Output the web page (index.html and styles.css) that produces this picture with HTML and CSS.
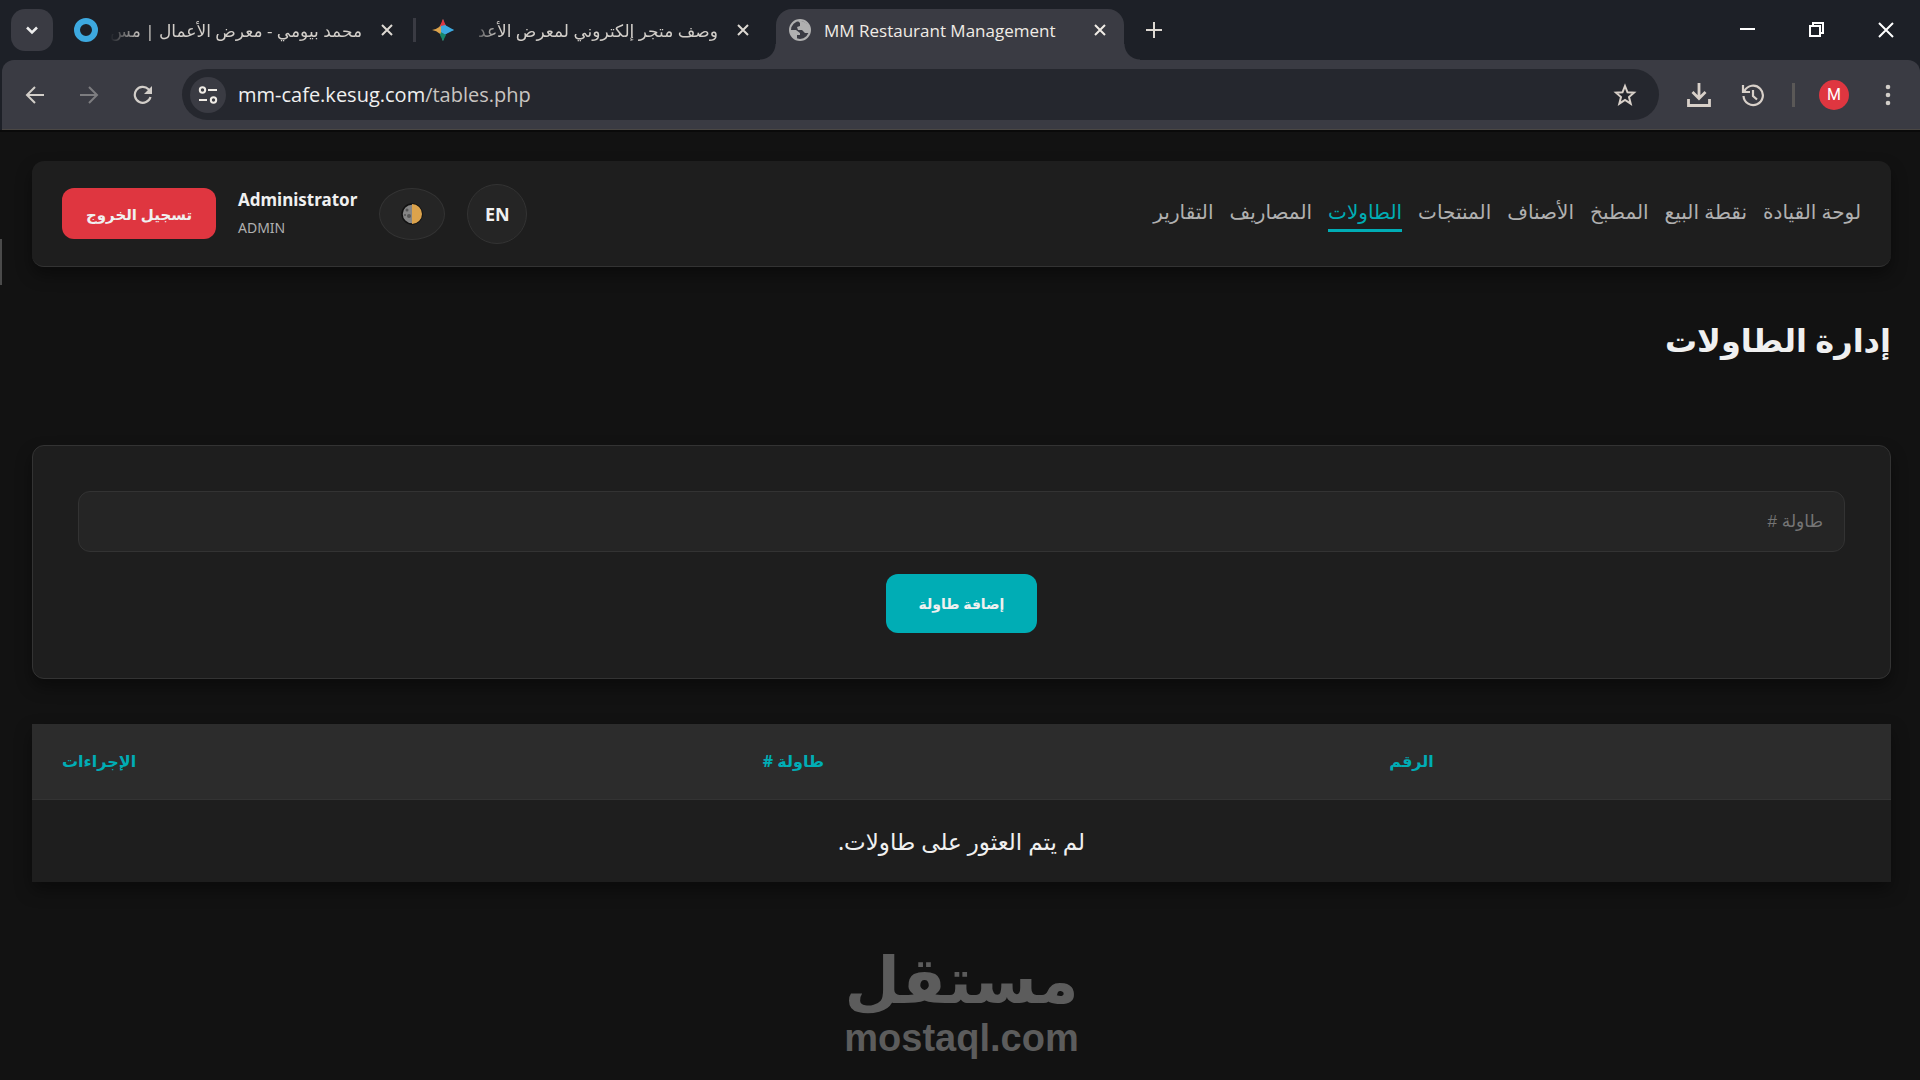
FILE: index.html
```
<!DOCTYPE html>
<html lang="ar">
<head>
<meta charset="utf-8">
<title>MM Restaurant Management</title>
<link rel="stylesheet" href="styles.css">
</head>
<body>
<div class="browser" dir="ltr">
  <div class="tabstrip">
    <button class="tab-search" aria-label="Search tabs"><svg width="14" height="14" viewBox="0 0 14 14"><path d="M2 4.500l5 5 5-5" fill="none" stroke="#eee" stroke-width="2.500"/></svg></button>
    <div class="tab tab-first">
      <svg class="favicon" viewBox="0 0 24 24"><circle cx="12" cy="12" r="9" fill="none" stroke="#3da9e0" stroke-width="6"/></svg>
      <span class="tab-title" dir="rtl">محمد بيومي - معرض الأعمال | مس</span>
      <button class="tab-close" aria-label="Close tab"><svg width="12" height="12" viewBox="0 0 12 12"><path d="M1 1l10 10M11 1L1 11" stroke="#ddd8d2" stroke-width="2"/></svg></button>
    </div>
    <span class="tab-sep"></span>
    <div class="tab tab-second">
      <svg class="favicon" viewBox="0 0 24 24"><path d="M12 1Q13.500 10.500 23 12H12z" fill="#3da9e0"/><path d="M12 1Q10.500 10.500 1 12h11z" fill="#dca34c"/><path d="M12 23Q10.500 13.500 1 12h11z" fill="#dca34c"/><path d="M12 23Q13.500 13.500 23 12H10z" fill="#3da9e0"/><path d="M12 1l3 7-3 3-3-3z" fill="#df3640"/><path d="M12 23l3-6-5-3-1 3z" fill="#16876a"/><path d="M10 8l4-1 9 5-8 4-5-2z" fill="#3da9e0"/></svg>
      <span class="tab-title" dir="rtl">وصف متجر إلكتروني لمعرض الأعد</span>
      <button class="tab-close" aria-label="Close tab"><svg width="12" height="12" viewBox="0 0 12 12"><path d="M1 1l10 10M11 1L1 11" stroke="#ddd8d2" stroke-width="2"/></svg></button>
    </div>
    <div class="tab tab-active">
      <svg class="favicon" viewBox="0 0 24 24"><circle cx="12" cy="12" r="10" fill="none" stroke="#b0b0b0" stroke-width="2"/><path d="M2 12h6l4 3v2h-3v4c-4 0-7-5-7-9zM10 3c5-1 11 3 12 8l-1 4h-4l-3-3h-4l-1-3 3-1V5z" fill="#b0b0b0"/></svg>
      <span class="tab-title">MM Restaurant Management</span>
      <button class="tab-close" aria-label="Close tab"><svg width="12" height="12" viewBox="0 0 12 12"><path d="M1 1l10 10M11 1L1 11" stroke="#f0ece6" stroke-width="2"/></svg></button>
    </div>
    <button class="new-tab" aria-label="New tab"><svg width="16" height="16" viewBox="0 0 16 16"><path d="M8 0v16M0 8h16" stroke="#ddd8d2" stroke-width="2"/></svg></button>
    <div class="window-buttons">
      <button aria-label="Minimize"><svg width="16" height="16" viewBox="0 0 16 16"><path d="M0 7h15" stroke="#fff" stroke-width="2"/></svg></button>
      <button aria-label="Restore"><svg width="16" height="16" viewBox="0 0 16 16"><path d="M1 4h10v10H1zM4 4V1h10v10h-3" fill="none" stroke="#fff" stroke-width="2"/></svg></button>
      <button aria-label="Close window"><svg width="16" height="16" viewBox="0 0 16 16"><path d="M1 1l14 14M15 1L1 15" stroke="#fff" stroke-width="2"/></svg></button>
    </div>
  </div>
  <div class="toolbar">
    <button class="tool" aria-label="Back"><svg width="20" height="20" viewBox="0 0 20 20"><path d="M19 10H2M10 2l-8 8 8 8" fill="none" stroke="#d2cec9" stroke-width="2"/></svg></button>
    <button class="tool" aria-label="Forward"><svg width="20" height="20" viewBox="0 0 20 20"><path d="M1 10h17M10 2l8 8-8 8" fill="none" stroke="#7d7d80" stroke-width="2"/></svg></button>
    <button class="tool" aria-label="Reload"><svg width="20" height="20" viewBox="0 0 20 20"><path d="M17.500 12A8 8 0 1 1 15.500 4.200L18 7" fill="none" stroke="#d2cec9" stroke-width="2.200"/><path d="M19 1v8h-8z" fill="#d2cec9"/></svg></button>
    <div class="omnibox">
      <button class="site-info" aria-label="Site information"><svg width="20" height="20" viewBox="0 0 20 20"><g fill="none" stroke="#f0ece6" stroke-width="2"><circle cx="4.500" cy="5" r="2.700"/><path d="M10 5h9M1 15h8"/><circle cx="15.500" cy="15" r="2.700"/></g></svg></button>
      <a class="url" href="#">mm-cafe.kesug.com<span>/tables.php</span></a>
      <button class="star" aria-label="Bookmark"><svg width="24" height="24" viewBox="0 0 24 24"><path d="M12 3l2.500 6.300 6.500.4-5 4.300 1.700 6.700L12 17l-5.700 3.700L8 14 3 9.700l6.500-.4z" fill="none" stroke="#d8d0c9" stroke-width="2"/></svg></button>
    </div>
    <button class="tool tool-download" aria-label="Downloads"><svg width="24" height="24" viewBox="0 0 24 24"><path d="M12 0v15M5.500 9l6.500 6.500L18.500 9M1.500 16v6.500h21V16" fill="none" stroke="#d8d0c9" stroke-width="2.800"/></svg></button>
    <button class="tool tool-history" aria-label="History"><svg width="24" height="24" viewBox="0 0 24 24"><path d="M3.500 8A9.700 9.700 0 1 1 2.500 13M2 2v7h7M12 7v6l4 3.500" fill="none" stroke="#d8d0c9" stroke-width="2.200"/></svg></button>
    <span class="tool-sep"></span>
    <button class="avatar" aria-label="Profile">M</button>
    <button class="menu" aria-label="Menu"><svg width="6" height="22" viewBox="0 0 6 22"><g fill="#d2cec9"><circle cx="3" cy="3" r="2.300"/><circle cx="3" cy="11" r="2.300"/><circle cx="3" cy="19" r="2.300"/></g></svg></button>
  </div>
</div>

<div class="app" dir="rtl">
  <span class="edge-mark"></span>
  <header class="navbar">
    <nav class="nav">
      <a href="#">لوحة القيادة</a>
      <a href="#">نقطة البيع</a>
      <a href="#">المطبخ</a>
      <a href="#">الأصناف</a>
      <a href="#">المنتجات</a>
      <a href="#" class="current">الطاولات</a>
      <a href="#">المصاريف</a>
      <a href="#">التقارير</a>
    </nav>
    <div class="account">
      <button class="lang">EN</button>
      <button class="theme" aria-label="Theme"><svg width="22" height="24" viewBox="0 0 22 24"><circle cx="11" cy="12" r="10" fill="#858585" stroke="#111" stroke-width="1.500"/><path d="M11 2a10 10 0 0 1 0 20z" fill="#dca34c"/><g fill="#555"><circle cx="6" cy="8" r="1.500"/><circle cx="8" cy="14" r="2"/><circle cx="4" cy="13" r="1"/></g></svg></button>
      <div class="user" dir="ltr"><strong>Administrator</strong><span>ADMIN</span></div>
      <button class="logout">تسجيل الخروج</button>
    </div>
  </header>

  <main>
    <h1>إدارة الطاولات</h1>
    <form class="card">
      <input type="text" class="field" placeholder="طاولة #" aria-label="طاولة #">
      <button type="button" class="add">إضافة طاولة</button>
    </form>
    <table class="tables">
      <colgroup><col class="col-id"><col class="col-name"><col class="col-actions"></colgroup>
      <thead><tr><th>الرقم</th><th>طاولة #</th><th>الإجراءات</th></tr></thead>
      <tbody><tr><td colspan="3">لم يتم العثور على طاولات.</td></tr></tbody>
    </table>
  </main>
  <footer class="brand"><span class="brand-ar">مستقل</span><span class="brand-en" dir="ltr">mostaql.com</span></footer>
</div>
</body>
</html>
```
FILE: styles.css
```
* { box-sizing: border-box; }

body {
  margin: 0;
  background: #121212;
  color: #f0f0f0;
  font-family: "Noto Sans", "DejaVu Sans", sans-serif;
}

button {
  display: flex;
  align-items: center;
  justify-content: center;
  padding: 0;
  border: 0;
  background: none;
  color: inherit;
  font-family: inherit;
}

a { color: inherit; text-decoration: none; }

svg { display: block; flex: none; }

/* Browser frame */
.browser {
  background: #1d2027;
  border-bottom: 2px solid #0a0a0a;
  font-family: "Open Sans", "Noto Sans", "DejaVu Sans", sans-serif;
}

.tabstrip {
  display: flex;
  height: 60px;
  padding-left: 11px;
}

.tab-search {
  width: 42px;
  height: 42px;
  margin-top: 9px;
  border-radius: 14px;
  background: #3a3b43;
}

.tab {
  display: flex;
  align-items: center;
  height: 42px;
  margin-top: 9px;
  color: #d2cec9;
}

.tab-first { width: 339px; margin-left: 21px; }
.tab-second { width: 318px; margin-left: 15px; margin-right: 27px; }

.tab-active {
  position: relative;
  width: 348px;
  height: 51px;
  padding: 0 18px 9px 12px;
  border-radius: 16px 16px 0 0;
  background: #3a3b43;
  color: #f0ece6;
}

.tab-active::before,
.tab-active::after {
  content: "";
  position: absolute;
  bottom: 0;
  width: 16px;
  height: 16px;
}

.tab-active::before {
  right: 100%;
  background: radial-gradient(circle at 0 0, #1d2027 15px, #3a3b43 16px);
}

.tab-active::after {
  left: 100%;
  background: radial-gradient(circle at 100% 0, #1d2027 15px, #3a3b43 16px);
}

.favicon { width: 24px; height: 24px; }

.tab-title {
  flex: 1;
  min-width: 0;
  margin: 2px 19px 0 12px;
  overflow: hidden;
  font-size: 17px;
  line-height: 26px;
  white-space: nowrap;
}

.tab-title[dir="rtl"] {
  -webkit-mask-image: linear-gradient(to right, transparent, #000 32px);
  mask-image: linear-gradient(to right, transparent, #000 32px);
}

.tab-sep {
  width: 3px;
  height: 24px;
  margin-top: 18px;
  background: #3a3b43;
}

.tab-first .tab-close { margin-right: 20px; }

.new-tab { width: 60px; height: 60px; }

.window-buttons { display: flex; margin-left: auto; }
.window-buttons button { width: 69px; height: 60px; }

.toolbar {
  display: flex;
  align-items: center;
  height: 70px;
  margin-left: 2px;
  padding: 0 29px 0 6px;
  border-bottom: 1px solid #4a4744;
  border-radius: 12px 12px 0 0;
  background: #3a3b43;
}

.tool { width: 54px; height: 40px; }
.tool-sep { width: 3px; height: 24px; margin: 0 24px 0 12px; background: #5a5857; }

.omnibox {
  display: flex;
  flex: 1;
  align-items: center;
  height: 51px;
  margin: 0 13px 0 12px;
  padding: 0 22px 0 8px;
  border-radius: 26px;
  background: #25272e;
}

.site-info {
  width: 36px;
  height: 36px;
  border-radius: 50%;
  background: #3a3b43;
}

.url {
  flex: 1;
  margin-left: 12px;
  color: #f0f0f0;
  font-size: 20px;
  line-height: 28px;
}

.url span { color: #c9c5c1; }

.avatar {
  width: 30px;
  height: 30px;
  border-radius: 50%;
  background: #df3640;
  color: #fff;
  font-size: 16px;
  font-family: Roboto, sans-serif;
}

.menu { width: 6px; margin-left: 36px; }

/* Application */
.app {
  position: relative;
  padding: 29px 29px 16px 32px;
}

.edge-mark {
  position: absolute;
  top: 107px;
  left: 0;
  width: 2px;
  height: 46px;
  background: #4a4a4a;
}

.navbar {
  display: flex;
  align-items: center;
  justify-content: space-between;
  min-height: 106px;
  padding: 0 30px;
  border-bottom: 1px solid #333;
  border-radius: 12px;
  background: #1e1e1e;
  box-shadow: 0 8px 16px rgba(0, 0, 0, 0.4);
}

.nav {
  display: flex;
  gap: 16px;
  font-size: 20px;
  line-height: 28px;
  color: #b0b0b0;
}

.nav a { padding: 2px 0 3px; border-bottom: 3px solid transparent; }
.nav .current { border-color: #00adb5; color: #00adb5; }

.account { display: flex; align-items: center; gap: 22px; }

.lang,
.theme {
  border: 1px solid #333;
  border-radius: 50%;
  background: #252525;
}

.lang { width: 60px; height: 60px; font-size: 18px; font-weight: 700; }
.theme { width: 66px; height: 52px; }

.user {
  display: flex;
  flex-direction: column;
  gap: 4px;
  line-height: 24px;
  font-size: 17px;
}

.user span { color: #b0b0b0; font-size: 14px; }

.logout {
  width: 154px;
  height: 51px;
  border-radius: 12px;
  background: #df3640;
  font-size: 15px;
  font-weight: 700;
}

h1 {
  margin: 48px 0 80px;
  font-size: 32px;
  font-weight: 700;
  line-height: 50px;
}

.card {
  display: flex;
  flex-direction: column;
  align-items: center;
  gap: 22px;
  padding: 45px;
  border: 1px solid #333;
  border-radius: 12px;
  background: #1e1e1e;
  box-shadow: 0 8px 16px rgba(0, 0, 0, 0.4);
}

.field {
  width: 100%;
  height: 61px;
  padding: 0 21px;
  border: 1px solid #333;
  border-radius: 12px;
  background: #252525;
  color: #f0f0f0;
  font-family: "Liberation Sans", "DejaVu Sans", sans-serif;
  font-size: 17px;
}

.field::placeholder { color: #757575; opacity: 1; }

.add {
  width: 151px;
  height: 59px;
  border-radius: 12px;
  background: #00adb5;
  font-size: 14px;
  font-weight: 700;
}

.tables {
  width: 100%;
  margin-top: 45px;
  border-collapse: collapse;
  table-layout: fixed;
  background: #1e1e1e;
  box-shadow: 0 8px 16px rgba(0, 0, 0, 0.4);
}

.col-id { width: 28.6%; }
.col-name { width: 33.7%; }
.col-actions { width: 37.7%; }

th {
  height: 75px;
  padding: 0 30px;
  border-bottom: 1px solid #333;
  background: #2c2c2c;
  color: #00adb5;
  font-size: 16px;
  text-align: left;
}

td {
  height: 83px;
  padding: 0 30px;
  font-size: 23px;
  text-align: center;
}

.brand {
  display: flex;
  flex-direction: column;
  align-items: center;
  margin-top: 60px;
  color: #5c5c5c;
  font-weight: 700;
}

.brand-ar { font-size: 64px; line-height: 74px; }
.brand-en { font-family: "Liberation Sans", sans-serif; font-size: 38px; line-height: 44px; }
```
